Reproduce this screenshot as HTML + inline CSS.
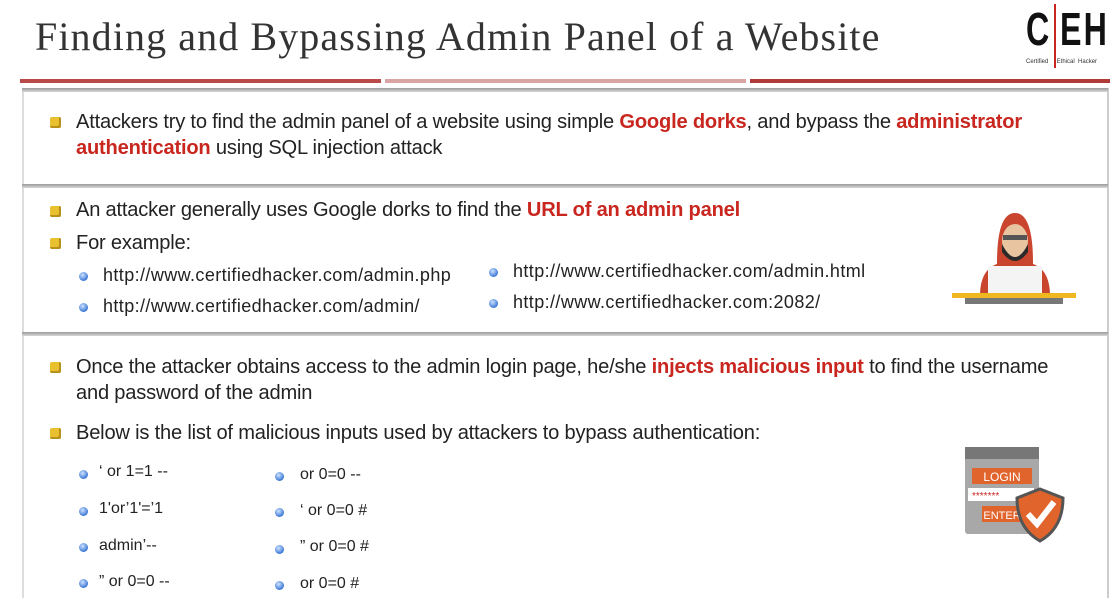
<!DOCTYPE html>
<html><head><style>
body{margin:0;width:1115px;height:598px;background:#fff;position:relative;overflow:hidden;font-family:"Liberation Sans",sans-serif;color:#222}
.a{position:absolute;white-space:nowrap}
h1{position:absolute;left:35px;top:13px;margin:0;font-family:"Liberation Serif",serif;font-weight:normal;font-size:40px;color:#333;letter-spacing:1.1px}
.t{font-size:20.1px;letter-spacing:-0.2px}
.r{color:#c8261f;font-weight:bold}
.sq{position:absolute;width:11px;height:11px;background:#e8c030;border-radius:2px;box-shadow:inset -2px -2px 0 #b8901a}
.dot{position:absolute;width:9px;height:9px;border-radius:50%;background:radial-gradient(circle at 40% 35%,#cfe3ff,#3b78d6 70%)}
.s{font-size:16px;color:#222}
.u{font-size:18px;letter-spacing:0.4px;color:#222}
.sep{position:absolute;left:22px;width:1086px;height:4px;background:linear-gradient(#9a9a9a,#d8d8d8)}
.logo{font:bold 46px 'Liberation Sans',sans-serif;color:#111;transform:scaleX(0.7);transform-origin:left top}
</style></head><body>
<h1>Finding and Bypassing Admin Panel of a Website</h1>
<div class="a logo" style="left:1026px;top:2px">C</div>
<div class="a" style="left:1054px;top:4px;width:2px;height:64px;background:#c8261f"></div>
<div class="a logo" style="left:1060px;top:2px;letter-spacing:3px">EH</div>
<div class="a" style="left:1026px;top:59px;font-size:6px;color:#333">Certified &nbsp;&nbsp;&nbsp; Ethical &nbsp;Hacker</div>
<div class="a" style="left:20px;top:79px;width:361px;height:4px;background:#b84a48"></div>
<div class="a" style="left:385px;top:79px;width:361px;height:4px;background:#d8a4a4"></div>
<div class="a" style="left:750px;top:79px;width:360px;height:4px;background:#b03a38"></div>
<div class="a" style="left:1107px;top:88px;width:2px;height:510px;background:#ccc"></div>
<div class="a" style="left:22px;top:88px;width:2px;height:510px;background:#ddd"></div>
<div class="sep" style="top:88px"></div>
<div class="sep" style="top:184px"></div>
<div class="sep" style="top:332px"></div>

<div class="sq" style="left:50px;top:117px"></div>
<div class="a t" style="left:76px;top:111px">Attackers try to find the admin panel of a website using simple <span class="r">Google dorks</span>, and bypass the <span class="r">administrator</span></div>
<div class="a t" style="left:76px;top:137px"><span class="r">authentication</span> using SQL injection attack</div>

<div class="sq" style="left:50px;top:206px"></div>
<div class="a t" style="left:76px;top:199px">An attacker generally uses Google dorks to find the <span class="r">URL of an admin panel</span></div>
<div class="sq" style="left:50px;top:238px"></div>
<div class="a t" style="left:76px;top:232px">For example:</div>
<div class="dot" style="left:79px;top:272px"></div><div class="a u" style="left:103px;top:265px">http://www.certifiedhacker.com/admin.php</div>
<div class="dot" style="left:79px;top:303px"></div><div class="a u" style="left:103px;top:296px">http://www.certifiedhacker.com/admin/</div>
<div class="dot" style="left:489px;top:268px"></div><div class="a u" style="left:513px;top:261px">http://www.certifiedhacker.com/admin.html</div>
<div class="dot" style="left:489px;top:299px"></div><div class="a u" style="left:513px;top:292px">http://www.certifiedhacker.com:2082/</div>

<svg class="a" style="left:950px;top:208px" width="130" height="100">
<path d="M47 88 L47 55 Q47 5 65 5 Q83 5 83 55 L83 88Z" fill="#c9452e"/>
<path d="M30 88 Q30 60 50 55 L80 55 Q100 60 100 88Z" fill="#c9452e"/>
<ellipse cx="65" cy="33" rx="13" ry="17" fill="#e8c4a0"/>
<path d="M52 36 Q65 62 78 36 L78 44 Q65 62 52 44Z" fill="#2a2a2a"/>
<rect x="53" y="27" width="24" height="5" fill="#555"/>
<rect x="38" y="58" width="54" height="30" fill="#f4f4f4"/>
<rect x="2" y="85" width="124" height="5" fill="#f0b820"/>
<rect x="15" y="90" width="98" height="6" fill="#777"/>
</svg>

<div class="sq" style="left:50px;top:362px"></div>
<div class="a t" style="left:76px;top:356px">Once the attacker obtains access to the admin login page, he/she <span class="r">injects malicious input</span> to find the username</div>
<div class="a t" style="left:76px;top:382px">and password of the admin</div>
<div class="sq" style="left:50px;top:428px"></div>
<div class="a t" style="left:76px;top:422px">Below is the list of malicious inputs used by attackers to bypass authentication:</div>

<div class="dot" style="left:79px;top:470px"></div><div class="a s" style="left:99px;top:463px">‘ or 1=1 --</div>
<div class="dot" style="left:79px;top:507px"></div><div class="a s" style="left:99px;top:500px">1'or’1'=’1</div>
<div class="dot" style="left:79px;top:543px"></div><div class="a s" style="left:99px;top:537px">admin’--</div>
<div class="dot" style="left:79px;top:579px"></div><div class="a s" style="left:99px;top:573px">” or 0=0 --</div>
<div class="dot" style="left:275px;top:472px"></div><div class="a s" style="left:300px;top:466px">or 0=0 --</div>
<div class="dot" style="left:275px;top:508px"></div><div class="a s" style="left:300px;top:502px">‘ or 0=0 #</div>
<div class="dot" style="left:275px;top:545px"></div><div class="a s" style="left:300px;top:538px">” or 0=0 #</div>
<div class="dot" style="left:275px;top:581px"></div><div class="a s" style="left:300px;top:575px">or 0=0 #</div>

<svg class="a" style="left:964px;top:446px" width="105" height="100">
<rect x="1" y="1" width="74" height="87" rx="3" fill="#a8a8a8"/>
<rect x="1" y="1" width="74" height="12" fill="#777"/>
<rect x="8" y="22" width="60" height="16" fill="#e0642c"/>
<text x="38" y="35" font-size="12" fill="#fff" text-anchor="middle" font-family="Liberation Sans">LOGIN</text>
<rect x="4" y="42" width="66" height="13" fill="#fff"/>
<text x="8" y="53" font-size="10" fill="#c8261f" font-family="Liberation Sans">*******</text>
<rect x="18" y="60" width="40" height="16" fill="#e0642c"/>
<text x="38" y="73" font-size="11" fill="#fff" text-anchor="middle" font-family="Liberation Sans">ENTER</text>
<path d="M76 43 L99 52 Q99 82 76 95 Q53 82 53 52Z" fill="#e0642c" stroke="#555" stroke-width="3"/>
<path d="M64 68 L73 78 L90 56" stroke="#fff" stroke-width="6" fill="none"/>
</svg>
</body></html>
